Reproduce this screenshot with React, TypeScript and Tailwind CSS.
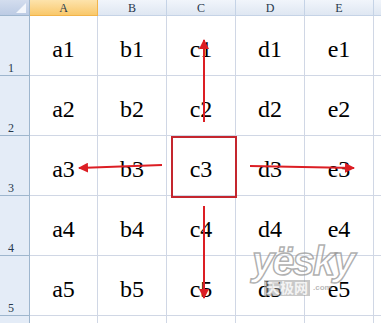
const cols = ['A', 'B', 'C', 'D', 'E'];
const rows = [1, 2, 3, 4, 5];

export default function App() {
  return (
    <div className="relative h-[323px] w-[381px] overflow-hidden bg-white" style={{ fontFamily: '"Liberation Serif", "Noto Sans CJK SC", serif' }}>
      <div className="grid grid-cols-[30px_68px_69px_69px_69px_69px_1fr] grid-rows-[16px_60px_60px_60px_60px_60px_1fr] h-full">
        {/* corner */}
        <div className="relative border-r border-b border-[#9eb6ce] bg-gradient-to-b from-[#d3ddee] to-[#bccbe4]">
          <div className="absolute right-[3px] bottom-[2px] h-0 w-0 border-b-[10px] border-l-[10px] border-b-[#f4f7fc] border-l-transparent" />
        </div>
        {cols.map((c) => (
          <div
            key={c}
            className={`flex items-center justify-center border-r border-b text-[12px] leading-none text-[#27384c] ${
              c === 'A'
                ? 'border-[#f2b44a] bg-gradient-to-b from-[#fde3ab] to-[#f9c86a]'
                : 'border-[#c5d3e6] bg-gradient-to-b from-[#f1f5fb] to-[#dfe7f2]'
            }`}
          >
            {c}
          </div>
        ))}
        <div className="border-b border-[#c5d3e6] bg-gradient-to-b from-[#f1f5fb] to-[#dfe7f2]" />

        {rows.map((r) => (
          <>
            <div key={`h${r}`} className="flex items-end border-r border-b border-[#9eb6ce] bg-[#e4ecf7] pb-[1px] pl-[8px] text-[12px] leading-none text-[#27384c]">
              {r}
            </div>
            {cols.map((c) => (
              <div key={`${c}${r}`} className="flex items-center justify-center border-r border-b border-[#d0d7e5] pt-[6px] text-[24px] leading-none text-black">
                {c.toLowerCase()}
                {r}
              </div>
            ))}
            <div key={`x${r}`} className="border-b border-[#d0d7e5]" />
          </>
        ))}

        <div className="border-r border-[#9eb6ce] bg-[#e4ecf7]" />
        {cols.map((c) => (
          <div key={`z${c}`} className="border-r border-[#d0d7e5]" />
        ))}
        <div />
      </div>

      {/* watermark */}
      <div className="pointer-events-none absolute left-[252px] top-[241px] select-none" style={{ fontFamily: '"Liberation Sans", "Noto Sans CJK SC", sans-serif' }}>
        <div className="text-[40px] font-bold italic leading-none tracking-[-2px] text-white/30" style={{ WebkitTextStroke: '1.5px rgba(150,150,150,0.75)' }}>
          yësky
        </div>
        <div className="ml-[12px] mt-[-1px] flex items-center gap-[3px]">
          <span className="bg-[#9a9a9a]/55 px-[2px] text-[14px] font-bold leading-[16px] text-white/80">天极网</span>
          <span className="text-[8px] font-bold leading-none text-[#999]/70">.com</span>
        </div>
      </div>

      {/* arrows + highlight */}
      <svg className="pointer-events-none absolute inset-0" width="381" height="323" viewBox="0 0 381 323">
        <defs>
          <marker id="ah" viewBox="0 0 10 10" refX="9" refY="5" markerWidth="5" markerHeight="5" orient="auto">
            <path d="M0 0 L10 5 L0 10 Z" fill="#dc1e24" />
          </marker>
        </defs>
        <rect x="172" y="137" width="64" height="60" fill="none" stroke="#c4262e" strokeWidth="2" />
        <g stroke="#dc1e24" strokeWidth="2" fill="none" markerEnd="url(#ah)">
          <line x1="204" y1="122" x2="204" y2="40" />
          <line x1="162" y1="165" x2="79" y2="168" />
          <line x1="250" y1="166" x2="354" y2="168" />
          <line x1="204" y1="206" x2="204" y2="298" />
        </g>
      </svg>
    </div>
  );
}
